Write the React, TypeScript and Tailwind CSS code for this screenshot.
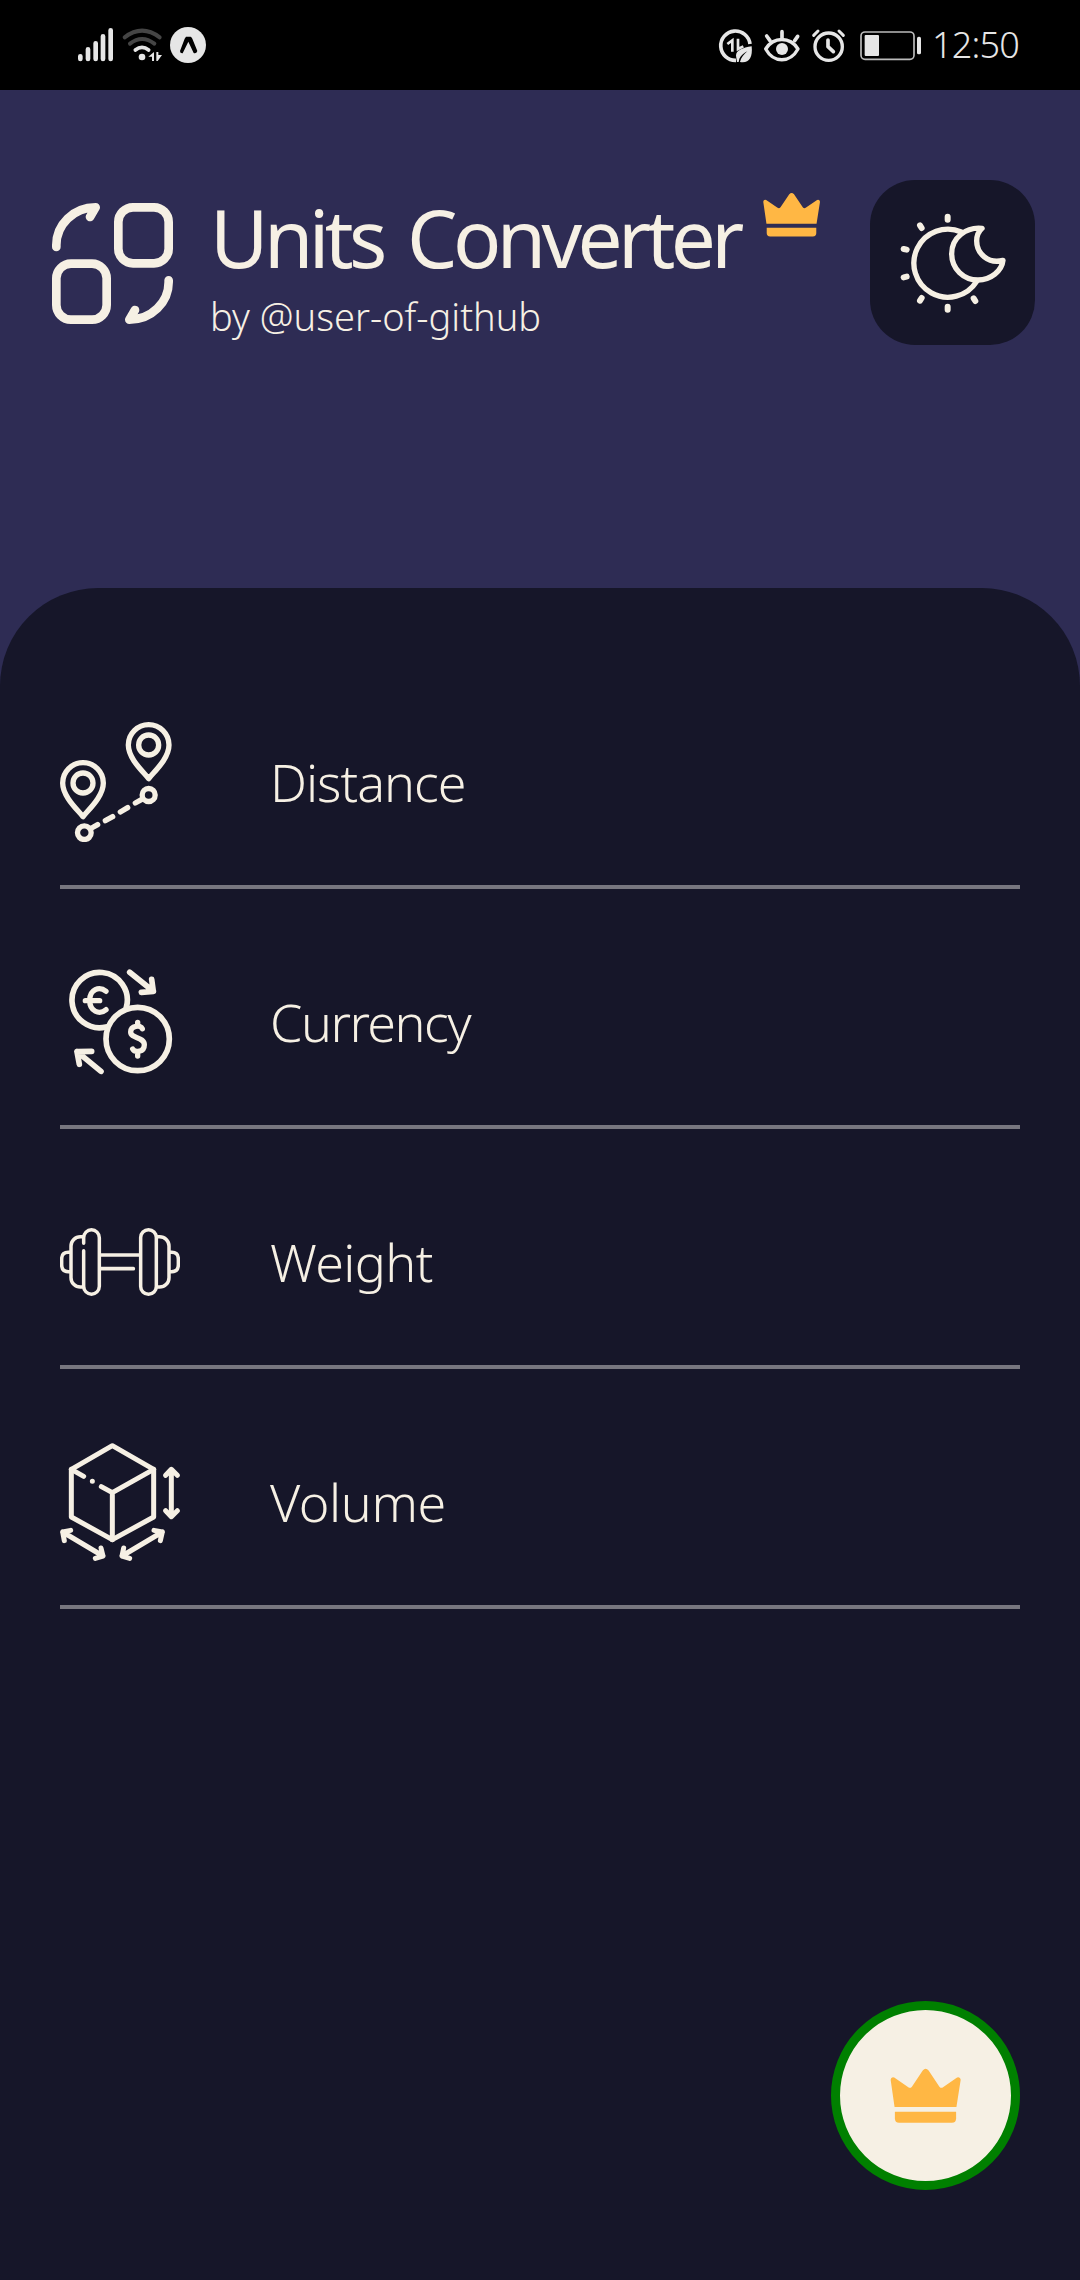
import type { ReactNode } from "react";

const CREAM = "#f6f0e4";
const STATUS = "#e6e6e6";

function LogoIcon() {
  return (
    <svg className="h-[125px] w-[125px] shrink-0" viewBox="60 63 375 375" fill="none" stroke={CREAM} strokeWidth="26" strokeLinecap="round" strokeLinejoin="round">
      <rect x="265" y="82" width="151" height="168" rx="44" />
      <rect x="79" y="251" width="151" height="168" rx="44" />
      <path d="M79 201V195C79 134 130 82 197 82L180 111" />
      <path d="M416 301V306C416 367 365 419 298 419L315 390" />
    </svg>
  );
}

function Crown({ className }: { className: string }) {
  return (
    <svg className={className} viewBox="209 232 215 168" fill="#ffb744">
      <path d="M222 351 210 268Q211 258 221 261L264 291Q270 295 275 289L308 240Q317 229 326 240L359 289Q364 295 370 291L413 261Q423 258 424 268L411 351Z" />
      <path d="M223 366H410V386Q410 399 397 399H236Q223 399 223 386Z" />
    </svg>
  );
}

function SunMoonIcon() {
  return (
    <svg className="h-[110px] w-[110px]" viewBox="112 112 330 330" fill="none" stroke={CREAM} strokeWidth="16" strokeLinecap="round" strokeLinejoin="round">
      <path d="M302 184A102 102 0 1 0 348 332" />
      <path d="M364 173C318 168 273 200 273 249C273 295 309 328 352 328C390 328 424 301 427 269C383 281 348 248 348 211C348 192 354 182 364 173Z" />
      <path strokeWidth="18" d="M261 138v9M178 164l5 8M129 235l9 2M129 320l9-2M178 390l5-8M261 408v9M339 383l5 8" />
    </svg>
  );
}

function Pin({ x, y }: { x: number; y: number }) {
  return (
    <g transform={`translate(${x} ${y})`}>
      <path d="M0 101C-13 83 -61 42 -61 0A61 61 0 0 1 61 0C61 42 13 83 0 101Z" />
      <circle r="30" />
    </g>
  );
}

function DistanceIcon() {
  return (
    <svg className="h-[120px] w-[120px]" viewBox="60 66 360 360" fill="none" stroke={CREAM} strokeWidth="16" strokeLinecap="round" strokeLinejoin="round">
      <Pin x={129} y={249} />
      <Pin x={326} y={135} />
      <circle cx="133" cy="398" r="20.500" />
      <circle cx="326" cy="285" r="19.500" />
      <path d="M155 384l18-10M196 362l22-12M241 336l22-13M286 309l18-10" />
    </svg>
  );
}

function CurrencyIcon() {
  return (
    <svg className="h-[120px] w-[120px]" viewBox="60 36 360 360" fill="none" stroke={CREAM} strokeWidth="17" strokeLinecap="round" strokeLinejoin="round">
      <path d="M259 172A83 83 0 1 0 198 231" />
      <circle cx="293" cy="267" r="95" />
      <path d="M269 67L340 124M335 88L340 124L304 127" />
      <path d="M183 364L111 305M155 304L111 305L118 343" />
      <path strokeWidth="16" d="M198 124C178 107 149 118 149 151C149 184 178 196 198 179M136 152H179" />
      <path strokeWidth="16" d="M307 236C302 224 272 226 272 246C272 267 313 259 313 284C313 307 285 309 278 297M293 217v10M293 306v12" />
    </svg>
  );
}

function WeightIcon() {
  return (
    <svg className="h-[120px] w-[120px]" viewBox="60 6 360 360" fill="none" stroke={CREAM} strokeWidth="10.500" strokeLinecap="round" strokeLinejoin="round">
      <path d="M131 130V113A23.500 23.500 0 0 1 178 113V259A23.500 23.500 0 0 1 131 259V152" />
      <rect x="302" y="89" width="47" height="194" rx="23.500" />
      <path d="M129 110H121A28 28 0 0 0 93 138V233A28 28 0 0 0 121 261H129M351 110H359A28 28 0 0 1 387 138V233A28 28 0 0 1 359 261H351" />
      <path d="M91 157H85Q65 157 65 177V195Q65 215 85 215H91M389 157H395Q415 157 415 177V195Q415 215 395 215H389" />
      <path strokeWidth="11" d="M180 165H300M180 206H280" />
    </svg>
  );
}

function VolumeIcon() {
  return (
    <svg className="h-[120px] w-[120px]" viewBox="60 36 360 360" fill="none" stroke={CREAM} strokeWidth="15" strokeLinecap="round" strokeLinejoin="round">
      <path d="M217 47L341 118V261L217 329L94 261V118Z" />
      <path d="M217 329V188L341 118M217 188L184 170M94 118L131 139M157 154h.1" />
      <path d="M394 119V259M377 136L394 118L412 136M377 242L394 260L412 242" />
      <path d="M68 306L189 378M92 301L68 306L73 332M183 354L189 378L166 385" />
      <path d="M246 378L367 306M342 301L367 306L361 332M251 354L246 378L269 385" />
    </svg>
  );
}

function StatusLeft() {
  return (
    <svg className="h-[70px] w-[180px]" viewBox="0 0 540 210" fill="none" strokeLinecap="round">
      <path stroke={STATUS} strokeWidth="14" d="M61 139v8M84 118v29M107 100v47M129 79v68M152 61v86" />
      <path stroke="#454545" strokeWidth="12" d="M194 82Q246 42 299 82M210 101Q246 73 283 101" />
      <path stroke={STATUS} strokeWidth="11" d="M226 120Q246 104 266 120" />
      <circle cx="246" cy="141" r="10" fill={STATUS} />
      <path fill={STATUS} d="M265 140l17-14v27h-6v-13zM289 126h6v9h11l-13 18h-4z" />
      <circle cx="384" cy="105" r="54" fill={STATUS} />
      <path fill="#000" d="M378 80h14q3 1 5 6l15 37q-3 9-11 6l-16-34-17 35q-8 1-8-7l14-37z" />
    </svg>
  );
}

function StatusIcons() {
  return (
    <svg className="h-[70px] w-[230px]" viewBox="0 0 690 210" fill="none" stroke={STATUS} strokeLinecap="round" strokeLinejoin="round">
      <path strokeWidth="11" strokeLinecap="butt" d="M150 102A44 44 0 1 0 108 151" />
      <path strokeWidth="8" strokeLinecap="butt" strokeLinejoin="miter" d="M82 102L97 91V125M114 86V117L130 109" />
      <path fill={STATUS} stroke="none" d="M155 109C128 113 108 121 108 137L111 156H116L118 146C123 136 133 128 142 124C132 133 123 142 120 156C145 161 159 145 155 109Z" />
      <path strokeWidth="10" d="M197 117C221 79 270 79 294 117C270 160 221 160 197 117Z" />
      <circle cx="246" cy="117" r="18" fill={STATUS} stroke="none" />
      <path strokeWidth="11" d="M246 65v18M200 78l10 14M293 79l-9 13" />
      <circle cx="386" cy="110" r="41" strokeWidth="10" />
      <path strokeWidth="11" d="M384 90v20l16 15" />
      <path strokeWidth="9" d="M341 76l13-13M417 63l13 13" />
      <rect x="483" y="66" width="159" height="82" rx="12" strokeWidth="5" stroke="#bbb" />
      <rect x="494" y="75" width="43" height="63" rx="3" fill={STATUS} stroke="none" />
      <rect x="651" y="80" width="12" height="53" rx="5" fill={STATUS} stroke="none" />
    </svg>
  );
}

function Row({ icon, label, tracking }: { icon: ReactNode; label: string; tracking: string }) {
  return (
    <li className="flex h-[240px] items-center gap-[90px] border-b-4 border-[#77767f] pt-[30px]">
      {icon}
      <span className={`text-[52px] leading-none font-light ${tracking}`}>{label}</span>
    </li>
  );
}

export default function App() {
  return (
    <div className="relative flex h-[2280px] w-[1080px] flex-col bg-[#2e2c54] font-['Noto_Sans','Open_Sans',sans-serif] text-[#f6f0e4]">
      <div className="flex h-[90px] items-center justify-between bg-black pr-[60px] pl-[60px] text-[#e6e6e6]">
        <StatusLeft />
        <div className="flex items-center">
          <StatusIcons />
          <span className="w-[90px] pl-[2px] text-[36px] leading-none font-light tracking-[-0.8px] whitespace-nowrap">12:50</span>
        </div>
      </div>
      <header className="flex h-[498px] items-start justify-between pt-[90px] pr-[45px] pl-[50px]">
        <div className="flex items-start">
          <div className="pt-[21px]">
            <LogoIcon />
          </div>
          <div className="flex flex-col pt-[13px] pl-[35px]">
            <h1 className="text-[80px] leading-[88px] tracking-[-4.6px] whitespace-nowrap [word-spacing:8px]">Units Converter</h1>
            <p className="pt-[3px] text-[38px] leading-[64px] font-light whitespace-nowrap">by @user-of-github</p>
          </div>
          <Crown className="mt-[12px] ml-[23px] h-[45px] w-[57px]" />
        </div>
        <button className="flex h-[165px] w-[165px] shrink-0 items-center justify-center rounded-[45px] bg-[#161629]">
          <SunMoonIcon />
        </button>
      </header>
      <main className="flex-1 rounded-t-[98px] bg-[#161629] px-[60px] pt-[61px]">
        <ul>
          <Row icon={<DistanceIcon />} label="Distance" tracking="tracking-[-1px]" />
          <Row icon={<CurrencyIcon />} label="Currency" tracking="tracking-[-1.5px]" />
          <Row icon={<WeightIcon />} label="Weight" tracking="tracking-[-0.6px]" />
          <Row icon={<VolumeIcon />} label="Volume" tracking="tracking-[-0.4px]" />
        </ul>
      </main>
      <button className="absolute right-[60px] bottom-[90px] flex h-[189px] w-[189px] items-center justify-center rounded-full border-[9px] border-[#008000] bg-[#f6f0e4]">
        <Crown className="mb-[1px] h-[55px] w-[71px]" />
      </button>
    </div>
  );
}
